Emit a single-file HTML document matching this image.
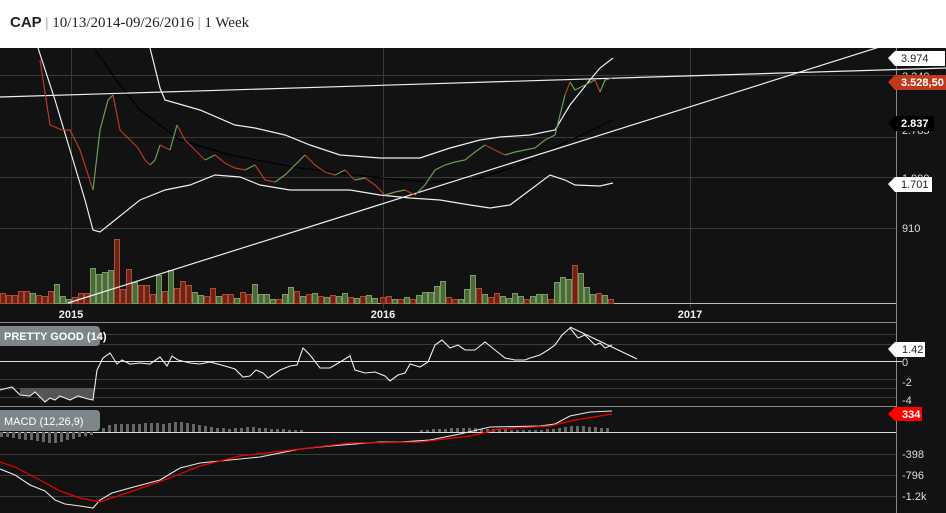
<!DOCTYPE html>
<html><head><meta charset="utf-8"><style>
html,body{margin:0;padding:0;width:946px;height:513px;overflow:hidden;background:#fff}
#hdr{position:absolute;left:10px;top:14px;font:15px "Liberation Serif",serif;color:#222}
#hdr b{font-family:"Liberation Sans",sans-serif;font-weight:bold}
#hdr .s{color:#888}
svg{position:absolute;left:0;top:48px}
text{font-family:"Liberation Sans",sans-serif;font-size:11px}
</style></head><body>
<div id="hdr"><b>CAP</b> <span class="s">|</span> 10/13/2014-09/26/2016 <span class="s">|</span> 1 Week</div>
<svg width="946" height="465" viewBox="0 48 946 465">
<rect x="0" y="48" width="946" height="465" fill="#121212"/>
<g stroke="#3a3a3a" stroke-width="1">
<line x1="0" y1="75.5" x2="896" y2="75.5"/><line x1="0" y1="137.5" x2="896" y2="137.5"/>
<line x1="0" y1="177.5" x2="896" y2="177.5"/><line x1="0" y1="228.5" x2="896" y2="228.5"/>
<line x1="71.5" y1="48" x2="71.5" y2="308"/><line x1="383.5" y1="48" x2="383.5" y2="308"/><line x1="690.5" y1="48" x2="690.5" y2="308"/>
<line x1="0" y1="334.5" x2="896" y2="334.5"/><line x1="0" y1="344.5" x2="896" y2="344.5"/>
<line x1="0" y1="379.5" x2="896" y2="379.5"/><line x1="0" y1="388.5" x2="896" y2="388.5"/><line x1="0" y1="397.5" x2="896" y2="397.5"/>
<line x1="0" y1="454.5" x2="896" y2="454.5"/><line x1="0" y1="475.5" x2="896" y2="475.5"/><line x1="0" y1="496.5" x2="896" y2="496.5"/>
</g>
<g stroke="#888" stroke-width="1">
<line x1="896.5" y1="48" x2="896.5" y2="513"/>
<line x1="0" y1="322.5" x2="896" y2="322.5"/><line x1="0" y1="406.5" x2="896" y2="406.5"/>
</g>
<line x1="0" y1="303.5" x2="896" y2="303.5" stroke="#bbb"/>
<line x1="0" y1="361.5" x2="902" y2="361.5" stroke="#ddd"/>
<line x1="0" y1="432.5" x2="896" y2="432.5" stroke="#ddd"/>
<g stroke-width="1">
<g fill="#6b2418" stroke="#b04a30">
<rect x="0.5" y="293.5" width="5" height="10"/><rect x="6.5" y="295.5" width="5" height="8"/><rect x="12.5" y="295.5" width="5" height="8"/><rect x="18.5" y="291.5" width="5" height="12"/><rect x="24.5" y="291.5" width="5" height="12"/><rect x="36.5" y="295.5" width="5" height="8"/><rect x="42.5" y="296.5" width="5" height="7"/><rect x="48.5" y="291.5" width="5" height="12"/><rect x="72.5" y="297.5" width="5" height="6"/><rect x="78.5" y="293.5" width="5" height="10"/><rect x="84.5" y="293.5" width="5" height="10"/><rect x="114.5" y="239.5" width="5" height="64"/><rect x="120.5" y="289.5" width="5" height="14"/><rect x="126.5" y="269.5" width="5" height="34"/><rect x="138.5" y="285.5" width="5" height="18"/><rect x="144.5" y="285.5" width="5" height="18"/><rect x="150.5" y="294.5" width="5" height="9"/><rect x="162.5" y="291.5" width="5" height="12"/><rect x="174.5" y="288.5" width="5" height="15"/><rect x="180.5" y="281.5" width="5" height="22"/><rect x="186.5" y="285.5" width="5" height="18"/><rect x="204.5" y="296.5" width="5" height="7"/><rect x="210.5" y="288.5" width="5" height="15"/><rect x="222.5" y="294.5" width="5" height="9"/><rect x="228.5" y="294.5" width="5" height="9"/><rect x="240.5" y="292.5" width="5" height="11"/><rect x="246.5" y="294.5" width="5" height="9"/><rect x="276.5" y="299.5" width="5" height="4"/><rect x="294.5" y="291.5" width="5" height="12"/><rect x="306.5" y="294.5" width="5" height="9"/><rect x="318.5" y="296.5" width="5" height="7"/><rect x="330.5" y="295.5" width="5" height="8"/><rect x="348.5" y="297.5" width="5" height="6"/><rect x="360.5" y="296.5" width="5" height="7"/><rect x="380.5" y="297.5" width="5" height="6"/><rect x="386.5" y="296.5" width="5" height="7"/><rect x="398.5" y="299.5" width="5" height="4"/><rect x="410.5" y="299.5" width="5" height="4"/><rect x="446.5" y="297.5" width="5" height="6"/><rect x="452.5" y="299.5" width="5" height="4"/><rect x="476.5" y="288.5" width="5" height="15"/><rect x="488.5" y="297.5" width="5" height="6"/><rect x="494.5" y="293.5" width="5" height="10"/><rect x="524.5" y="299.5" width="5" height="4"/><rect x="548.5" y="299.5" width="5" height="4"/><rect x="572.5" y="265.5" width="5" height="38"/><rect x="596.5" y="293.5" width="5" height="10"/><rect x="608.5" y="299.5" width="5" height="4"/>
</g>
<g fill="#4a6a3c" stroke="#7c9c60">
<rect x="30.5" y="293.5" width="5" height="10"/><rect x="54.5" y="284.5" width="5" height="19"/><rect x="60.5" y="296.5" width="5" height="7"/><rect x="66.5" y="299.5" width="5" height="4"/><rect x="90.5" y="268.5" width="5" height="35"/><rect x="96.5" y="274.5" width="5" height="29"/><rect x="102.5" y="272.5" width="5" height="31"/><rect x="108.5" y="270.5" width="5" height="33"/><rect x="132.5" y="282.5" width="5" height="21"/><rect x="156.5" y="275.5" width="5" height="28"/><rect x="168.5" y="270.5" width="5" height="33"/><rect x="192.5" y="292.5" width="5" height="11"/><rect x="198.5" y="295.5" width="5" height="8"/><rect x="216.5" y="296.5" width="5" height="7"/><rect x="234.5" y="298.5" width="5" height="5"/><rect x="252.5" y="284.5" width="5" height="19"/><rect x="258.5" y="294.5" width="5" height="9"/><rect x="264.5" y="294.5" width="5" height="9"/><rect x="270.5" y="299.5" width="5" height="4"/><rect x="282.5" y="294.5" width="5" height="9"/><rect x="288.5" y="287.5" width="5" height="16"/><rect x="300.5" y="296.5" width="5" height="7"/><rect x="312.5" y="293.5" width="5" height="10"/><rect x="324.5" y="297.5" width="5" height="6"/><rect x="336.5" y="296.5" width="5" height="7"/><rect x="342.5" y="293.5" width="5" height="10"/><rect x="354.5" y="298.5" width="5" height="5"/><rect x="366.5" y="295.5" width="5" height="8"/><rect x="372.5" y="298.5" width="5" height="5"/><rect x="392.5" y="299.5" width="5" height="4"/><rect x="404.5" y="297.5" width="5" height="6"/><rect x="416.5" y="295.5" width="5" height="8"/><rect x="422.5" y="292.5" width="5" height="11"/><rect x="428.5" y="292.5" width="5" height="11"/><rect x="434.5" y="286.5" width="5" height="17"/><rect x="440.5" y="281.5" width="5" height="22"/><rect x="458.5" y="299.5" width="5" height="4"/><rect x="464.5" y="289.5" width="5" height="14"/><rect x="470.5" y="275.5" width="5" height="28"/><rect x="482.5" y="294.5" width="5" height="9"/><rect x="500.5" y="296.5" width="5" height="7"/><rect x="506.5" y="298.5" width="5" height="5"/><rect x="512.5" y="293.5" width="5" height="10"/><rect x="518.5" y="296.5" width="5" height="7"/><rect x="530.5" y="296.5" width="5" height="7"/><rect x="536.5" y="294.5" width="5" height="9"/><rect x="542.5" y="294.5" width="5" height="9"/><rect x="554.5" y="282.5" width="5" height="21"/><rect x="560.5" y="277.5" width="5" height="26"/><rect x="566.5" y="279.5" width="5" height="24"/><rect x="578.5" y="273.5" width="5" height="30"/><rect x="584.5" y="287.5" width="5" height="16"/><rect x="590.5" y="294.5" width="5" height="9"/><rect x="602.5" y="295.5" width="5" height="8"/>
</g></g>
<polyline fill="none" stroke="#000" stroke-width="1.2" points="95,50 120,85 140,110 180,140 230,155 300,168 380,178 430,182 480,178 520,165 560,145 613,120"/>
<g fill="none" stroke="#eee" stroke-width="1.2">
<polyline points="38,48 55,100 70,150 85,200 93,230 100,232 115,220 140,200 165,190 190,185 215,175 240,177 260,185 290,190 320,190 350,190 380,195 410,198 440,200 470,205 490,208 510,205 530,190 550,175 565,180 575,185 600,186 613,183"/>
<polyline points="150,48 160,88 165,100 200,110 235,125 255,128 285,135 310,145 340,155 380,158 420,158 450,148 480,140 500,137 530,135 555,130 570,105 590,80 600,68 613,58"/>
<line x1="0" y1="97" x2="946" y2="68"/>
<line x1="68" y1="303" x2="946" y2="26"/>
</g>
<path fill="none" stroke="#b83a22" stroke-width="1.2" d="M40,60 L50,125 62,130 70,130 80,150 93,190 M113,95 L120,130 130,140 138,148 145,160 150,165 M160,145 L170,150 M177,125 L185,140 195,150 205,160 M215,155 L225,163 235,168 245,170 M255,165 L265,180 275,182 M305,155 L315,165 325,172 335,175 M345,170 L355,180 M365,178 L375,185 385,195 M405,190 L415,195 M485,145 L495,150 505,155 M565,95 L570,82 M595,80 L600,92"/>
<path fill="none" stroke="#6e9e4c" stroke-width="1.2" d="M93,190 L100,130 108,100 113,95 M150,165 L155,160 160,145 M170,150 L177,125 M205,160 L215,155 M245,170 L255,165 M275,182 L285,175 295,165 305,155 M335,175 L345,170 M355,180 L365,178 M385,195 L395,192 405,190 M415,195 L425,185 435,170 445,165 455,162 465,160 475,152 485,145 M505,155 L515,152 525,150 535,148 545,140 555,135 565,95 M570,82 L575,90 585,85 595,80 M600,92 L605,80 612,78"/>
<path fill="#555" d="M20,388 L20,395 30,396 35,392 45,402 50,398 55,400 60,396 70,400 78,396 88,399 93,400 95,388Z"/>
<polyline fill="none" stroke="#eee" stroke-width="1.1" points="0,390 12,387 20,395 30,396 35,392 45,402 50,398 55,400 60,396 70,400 78,396 88,399 93,400 97,370 103,358 110,353 117,364 122,360 130,364 140,363 150,364 160,357 167,366 172,356 178,360 190,363 200,364 210,362 225,366 235,369 243,377 250,376 256,370 263,373 268,378 280,370 290,366 297,365 303,348 310,355 320,368 330,368 340,362 350,356 355,370 365,373 375,372 385,376 390,381 398,375 405,373 410,364 420,367 428,362 435,345 442,340 450,348 458,345 465,350 475,350 485,342 495,350 505,358 515,360 525,360 530,358 540,355 548,350 555,345 562,335 570,328 578,338 585,335 595,345 600,343 605,348 612,345"/>
<line x1="570" y1="327" x2="637" y2="359" stroke="#eee" stroke-width="1.1"/>
<g fill="#666">
<rect x="0" y="432" width="3" height="5"/><rect x="6" y="432" width="3" height="5"/><rect x="12" y="432" width="3" height="6"/><rect x="18" y="432" width="3" height="7"/><rect x="24" y="432" width="3" height="8"/><rect x="30" y="432" width="3" height="8"/><rect x="36" y="432" width="3" height="9"/><rect x="42" y="432" width="3" height="10"/><rect x="48" y="432" width="3" height="11"/><rect x="54" y="432" width="3" height="11"/><rect x="60" y="432" width="3" height="10"/><rect x="66" y="432" width="3" height="8"/><rect x="72" y="432" width="3" height="7"/><rect x="78" y="432" width="3" height="5"/><rect x="84" y="432" width="3" height="4"/><rect x="90" y="432" width="3" height="3"/>
<rect x="102" y="428" width="3" height="4"/><rect x="108" y="425" width="3" height="7"/><rect x="114" y="424" width="3" height="8"/><rect x="120" y="424" width="3" height="8"/><rect x="126" y="424" width="3" height="8"/><rect x="132" y="424" width="3" height="8"/><rect x="138" y="424" width="3" height="8"/><rect x="144" y="423" width="3" height="9"/><rect x="150" y="423" width="3" height="9"/><rect x="156" y="423" width="3" height="9"/><rect x="162" y="424" width="3" height="8"/><rect x="168" y="423" width="3" height="9"/><rect x="174" y="422" width="3" height="10"/><rect x="180" y="422" width="3" height="10"/><rect x="186" y="423" width="3" height="9"/><rect x="192" y="424" width="3" height="8"/><rect x="198" y="425" width="3" height="7"/><rect x="204" y="426" width="3" height="6"/><rect x="210" y="427" width="3" height="5"/><rect x="216" y="428" width="3" height="4"/><rect x="222" y="428" width="3" height="4"/><rect x="228" y="429" width="3" height="3"/><rect x="234" y="428" width="3" height="4"/><rect x="240" y="428" width="3" height="4"/><rect x="246" y="427" width="3" height="5"/><rect x="252" y="427" width="3" height="5"/><rect x="258" y="428" width="3" height="4"/><rect x="264" y="428" width="3" height="4"/><rect x="270" y="429" width="3" height="3"/><rect x="276" y="429" width="3" height="3"/><rect x="282" y="429" width="3" height="3"/><rect x="288" y="430" width="3" height="2"/><rect x="294" y="430" width="3" height="2"/><rect x="300" y="430" width="3" height="2"/>
<rect x="420" y="430" width="3" height="2"/><rect x="426" y="430" width="3" height="2"/><rect x="432" y="429" width="3" height="3"/><rect x="438" y="429" width="3" height="3"/><rect x="444" y="429" width="3" height="3"/><rect x="450" y="428" width="3" height="4"/><rect x="456" y="428" width="3" height="4"/><rect x="462" y="428" width="3" height="4"/><rect x="468" y="428" width="3" height="4"/><rect x="474" y="428" width="3" height="4"/><rect x="480" y="429" width="3" height="3"/><rect x="486" y="429" width="3" height="3"/><rect x="492" y="429" width="3" height="3"/><rect x="498" y="429" width="3" height="3"/><rect x="504" y="429" width="3" height="3"/><rect x="510" y="430" width="3" height="2"/><rect x="516" y="430" width="3" height="2"/><rect x="522" y="430" width="3" height="2"/><rect x="528" y="430" width="3" height="2"/><rect x="534" y="430" width="3" height="2"/><rect x="540" y="430" width="3" height="2"/><rect x="546" y="429" width="3" height="3"/><rect x="552" y="429" width="3" height="3"/><rect x="558" y="428" width="3" height="4"/><rect x="564" y="427" width="3" height="5"/><rect x="570" y="426" width="3" height="6"/><rect x="576" y="426" width="3" height="6"/><rect x="582" y="426" width="3" height="6"/><rect x="588" y="427" width="3" height="5"/><rect x="594" y="427" width="3" height="5"/><rect x="600" y="428" width="3" height="4"/><rect x="606" y="428" width="3" height="4"/>
</g>
<polyline fill="none" stroke="#e8e8e8" stroke-width="1.1" points="0,469 15,475 30,485 45,491 55,500 65,504 80,506 93,508 100,500 112,493 130,488 160,480 180,468 200,463 240,459 260,457 300,449 330,446 380,442 400,442 430,440 460,434 490,427 540,426 555,424 570,416 590,412 612,411"/>
<polyline fill="none" stroke="#e00" stroke-width="1.2" points="0,462 15,467 40,480 60,491 80,498 100,502 130,492 170,478 200,466 240,456 300,449 350,443 420,442 470,436 500,429 550,426 575,420 612,414"/>
<rect x="-5" y="326" width="105" height="20" rx="4" fill="#7d8789"/>
<text x="4" y="340" fill="#fff" font-size="12" font-weight="bold">PRETTY GOOD (14)</text>
<rect x="-5" y="410" width="105" height="21" rx="4" fill="#7d8789"/>
<text x="4" y="425" fill="#fff" font-size="12">MACD (12,26,9)</text>
<g fill="#eee" font-weight="bold" font-size="12" text-anchor="middle">
<text x="71" y="318">2015</text><text x="383" y="318">2016</text><text x="690" y="318">2017</text>
</g>
<g fill="#ddd" font-size="11">
<text x="902" y="232">910</text><text x="902" y="366">0</text><text x="902" y="386">-2</text><text x="902" y="404">-4</text>
<text x="902" y="458">-398</text><text x="902" y="479">-796</text><text x="902" y="500">-1.2k</text>
<text x="902" y="80">3.240</text><text x="902" y="134">2.785</text><text x="902" y="182">1.990</text>
</g>
<g font-size="11">
<path d="M888,58 L895,51 L945,51 L945,66 L895,66Z" fill="#fff"/><text x="901" y="62" fill="#222">3.974</text>
<path d="M888,82 L895,75 L946,75 L946,90 L895,90Z" fill="#c0391b"/><text x="901" y="86" fill="#fff" font-weight="bold">3.528,50</text>
<path d="M888,123 L895,116 L934,116 L934,131 L895,131Z" fill="#000"/><text x="901" y="127" fill="#fff" font-weight="bold">2.837</text>
<path d="M888,184 L895,177 L932,177 L932,192 L895,192Z" fill="#fff"/><text x="901" y="188" fill="#222">1.701</text>
<path d="M888,349 L895,342 L925,342 L925,357 L895,357Z" fill="#fff"/><text x="902" y="353" fill="#222">1.42</text>
<path d="M888,414 L895,407 L922,407 L922,421 L895,421Z" fill="#f00"/><text x="902" y="418" fill="#fff" font-weight="bold">334</text>
</g>
</svg>
</body></html>
